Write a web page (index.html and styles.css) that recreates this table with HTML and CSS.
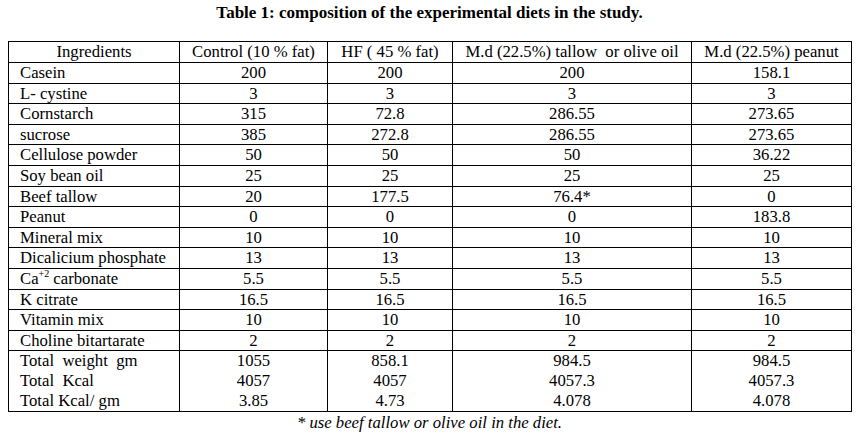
FILE: index.html
```html
<!DOCTYPE html>
<html>
<head>
<meta charset="utf-8">
<link rel="stylesheet" href="styles.css">
</head>
<body>
<div class="page">
  <h1 class="title">Table 1: composition of the experimental diets in the study.</h1>
  <table class="diet">
    <colgroup>
      <col class="c1"><col class="c2"><col class="c3"><col class="c4"><col class="c5">
    </colgroup>
    <thead>
      <tr><th>Ingredients</th><th>Control (10 % fat)</th><th>HF ( 45 % fat)</th><th>M.d (22.5%) tallow  or olive oil</th><th>M.d (22.5%) peanut</th></tr>
    </thead>
    <tbody>
      <tr><td>Casein</td><td>200</td><td>200</td><td>200</td><td>158.1</td></tr>
      <tr><td>L- cystine</td><td>3</td><td>3</td><td>3</td><td>3</td></tr>
      <tr><td>Cornstarch</td><td>315</td><td>72.8</td><td>286.55</td><td>273.65</td></tr>
      <tr><td>sucrose</td><td>385</td><td>272.8</td><td>286.55</td><td>273.65</td></tr>
      <tr><td>Cellulose powder</td><td>50</td><td>50</td><td>50</td><td>36.22</td></tr>
      <tr><td>Soy bean oil</td><td>25</td><td>25</td><td>25</td><td>25</td></tr>
      <tr><td>Beef tallow</td><td>20</td><td>177.5</td><td>76.4*</td><td>0</td></tr>
      <tr><td>Peanut</td><td>0</td><td>0</td><td>0</td><td>183.8</td></tr>
      <tr><td>Mineral mix</td><td>10</td><td>10</td><td>10</td><td>10</td></tr>
      <tr><td>Dicalicium phosphate</td><td>13</td><td>13</td><td>13</td><td>13</td></tr>
      <tr><td>Ca<sup>+2</sup> carbonate</td><td>5.5</td><td>5.5</td><td>5.5</td><td>5.5</td></tr>
      <tr><td>K citrate</td><td>16.5</td><td>16.5</td><td>16.5</td><td>16.5</td></tr>
      <tr><td>Vitamin mix</td><td>10</td><td>10</td><td>10</td><td>10</td></tr>
      <tr><td>Choline bitartarate</td><td>2</td><td>2</td><td>2</td><td>2</td></tr>
      <tr class="total first"><td>Total  weight  gm</td><td>1055</td><td>858.1</td><td>984.5</td><td>984.5</td></tr>
      <tr class="total"><td>Total  Kcal</td><td>4057</td><td>4057</td><td>4057.3</td><td>4057.3</td></tr>
      <tr class="total last"><td>Total Kcal/ gm</td><td>3.85</td><td>4.73</td><td>4.078</td><td>4.078</td></tr>
    </tbody>
  </table>
  <p class="note">* use beef tallow or olive oil in the diet.</p>
</div>
</body>
</html>
```
FILE: styles.css
```css
html, body {
  margin: 0;
  padding: 0;
  background: #fff;
}
body {
  font-family: "Liberation Serif", "Times New Roman", serif;
  color: #000;
}
.page {
  width: 857px;
  height: 443px;
  padding: 0 0 0 8px;
  box-sizing: border-box;
}
.title {
  margin: 0;
  padding-top: 3px;
  height: 41px;
  box-sizing: border-box;
  font-size: 17px;
  font-weight: bold;
  line-height: 20px;
  text-align: center;
  width: 843px;
}
.diet {
  border-collapse: collapse;
  table-layout: fixed;
  width: 843px;
  font-family: "Liberation Serif", "Times New Roman", serif;
  font-size: 16.7px;
  font-weight: 400;
}
.c1 { width: 171px; }
.c2 { width: 148px; }
.c3 { width: 125px; }
.c4 { width: 239px; }
.c5 { width: 160px; }
.diet th, .diet td {
  border: 1px solid #000;
  padding: 0;
  height: 19.6px;
  line-height: 19.6px;
  text-align: center;
  white-space: pre;
  font-weight: 400;
}
.diet th { height: 20px; line-height: 20px; }
.diet td:first-child {
  text-align: left;
  padding-left: 11px;
}
.diet tr.total td {
  border-top: none;
  border-bottom: none;
  height: 20px;
  line-height: 20px;
}
.diet tr.total.first td { border-top: 1px solid #000; }
.diet tr.total.last td { border-bottom: 1px solid #000; }
.diet sup {
  font-size: 10px;
  line-height: 0;
  vertical-align: 7px;
}
.note {
  margin: 0;
  padding-top: 1px;
  width: 843px;
  text-align: center;
  font-style: italic;
  font-size: 16.7px;
  line-height: 20px;
}
```
